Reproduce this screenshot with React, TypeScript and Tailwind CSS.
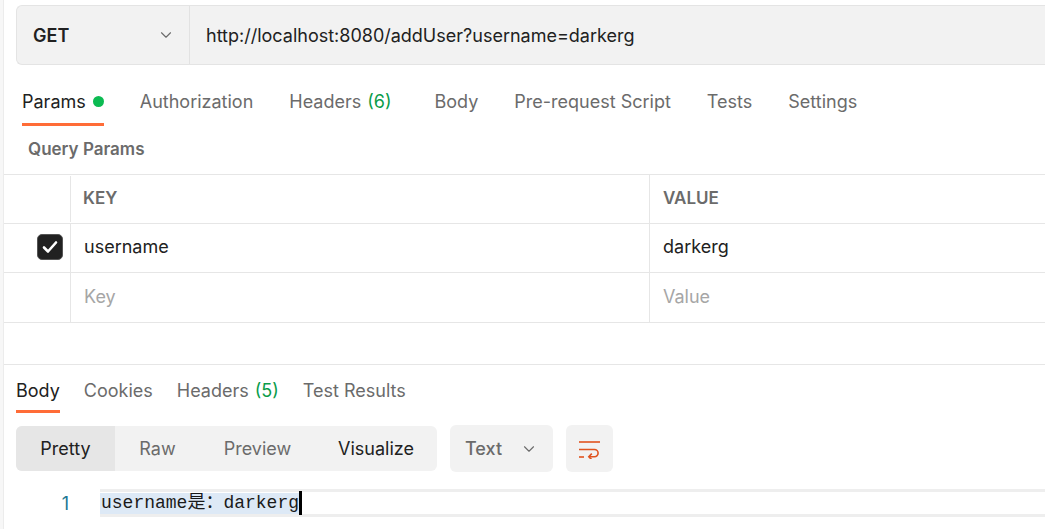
import { ChevronDown } from "lucide-react";

const reqTabs = [
  { label: "Params", dot: true, active: true },
  { label: "Authorization" },
  { label: "Headers", count: "(6)", extra: true },
  { label: "Body" },
  { label: "Pre-request Script" },
  { label: "Tests" },
  { label: "Settings" },
];

const resTabs = [
  { label: "Body", active: true },
  { label: "Cookies" },
  { label: "Headers", count: "(5)" },
  { label: "Test Results" },
];

function WrapIcon() {
  return (
    <svg width="24" height="20" viewBox="0 0 24 20" fill="none" stroke="#e0531f" strokeWidth="1.6">
      <path d="M1 3h21" />
      <path d="M1 10.5h15.5a3.6 3.6 0 0 1 0 7.2H11" />
      <path d="M13.8 14.6l-3 3.1 3 3" />
      <path d="M1 18h5" />
    </svg>
  );
}

export default function App() {
  return (
    <div
      className="w-[1045px] h-[529px] overflow-hidden bg-[#f7f7f7] pl-[3px]"
      style={{ fontFamily: "Inter, 'Noto Sans', sans-serif" }}
    >
      <div className="h-full bg-white border-l border-[#ececec]">
        {/* URL bar */}
        <div className="pt-[5px] pl-[12px]">
          <div className="flex h-[60px] bg-[#f2f2f2] border border-[#e4e4e4] border-r-0 rounded-l-[6px]">
            <div className="w-[173px] flex items-center justify-between pl-[16px] pr-[14px] border-r border-[#e2e2e2]">
              <span className="text-[18px] font-semibold text-[#212121]">GET</span>
              <ChevronDown size={18} strokeWidth={1.5} color="#6b6b6b" />
            </div>
            <div className="flex items-center pl-[16px] text-[18px] text-[#212121]">
              http://localhost:8080/addUser?username=darkerg
            </div>
          </div>
        </div>

        {/* Request tabs */}
        <div className="flex pl-[18px] h-[61px] items-end">
          {reqTabs.map((t) => (
            <div key={t.label} className={`flex flex-col ${t.extra ? "mr-[43px]" : "mr-[36px]"}`}>
              <div className={`flex items-center text-[18px] h-[26px] mb-[9px] ${t.active ? "text-[#212121]" : "text-[#6b6b6b]"}`}>
                {t.label}
                {t.count && <span className="ml-[6px] text-[#0a9c4a]">{t.count}</span>}
                {t.dot && <span className="ml-[7px] w-[11px] h-[11px] rounded-full bg-[#0cbb52]" />}
              </div>
              <div className={`h-[3px] ${t.active ? "bg-[#ff6c37]" : "bg-transparent"}`} />
            </div>
          ))}
        </div>

        {/* Query params */}
        <div className="h-[48px] flex items-center pl-[24px] text-[17px] font-semibold text-[#6b6b6b]">
          Query Params
        </div>

        <div className="border-t border-b border-[#e6e6e6]">
          <div className="flex h-[49px] border-b border-[#e6e6e6]">
            <div className="w-[67px] border-r border-[#e6e6e6] my-[1px]" />
            <div className="w-[579px] border-r border-[#e6e6e6] flex items-center pl-[12px] text-[17px] font-semibold text-[#6b6b6b]">
              KEY
            </div>
            <div className="flex-1 flex items-center pl-[13px] text-[17px] font-semibold text-[#6b6b6b]">VALUE</div>
          </div>
          <div className="flex h-[49px] border-b border-[#e6e6e6]">
            <div className="w-[67px] border-r border-[#e6e6e6] flex items-center justify-end pr-[7px] pb-[2px]">
              <div className="w-[26px] h-[26px] rounded-[5px] bg-[#212121] border border-[#555] flex items-center justify-center">
                <svg width="16" height="14" viewBox="0 0 16 14" fill="none" stroke="white" strokeWidth="2.6" strokeLinecap="round" strokeLinejoin="round">
                  <path d="M2 7.5l4 4 8-9" />
                </svg>
              </div>
            </div>
            <div className="w-[579px] border-r border-[#e6e6e6] flex items-center pl-[13px] pb-[3px] text-[18px] text-[#212121]">
              username
            </div>
            <div className="flex-1 flex items-center pl-[13px] pb-[3px] text-[18px] text-[#212121]">darkerg</div>
          </div>
          <div className="flex h-[49px]">
            <div className="w-[67px] border-r border-[#e6e6e6]" />
            <div className="w-[579px] border-r border-[#e6e6e6] flex items-center pl-[13px] pb-[3px] text-[18px] text-[#a6a6a6]">
              Key
            </div>
            <div className="flex-1 flex items-center pl-[13px] pb-[3px] text-[18px] text-[#a6a6a6]">Value</div>
          </div>
        </div>

        <div className="h-[42px] border-b border-[#e6e6e6]" />

        {/* Response tabs */}
        <div className="flex pl-[12px] h-[48px] items-end">
          {resTabs.map((t) => (
            <div key={t.label} className="mr-[24px] flex flex-col">
              <div className={`flex items-center text-[18px] h-[37px] pb-[2px] ${t.active ? "text-[#212121]" : "text-[#6b6b6b]"}`}>
                {t.label}
                {t.count && <span className="ml-[6px] text-[#0a9c4a]">{t.count}</span>}
              </div>
              <div className={`h-[3px] ${t.active ? "bg-[#ff6c37]" : "bg-transparent"}`} />
            </div>
          ))}
        </div>

        {/* Toolbar */}
        <div className="flex items-center pl-[12px] mt-[12px] gap-[13px]">
          <div className="flex h-[45px] w-[421px] bg-[#f2f2f2] rounded-[6px] overflow-hidden text-[18px]">
            <div className="w-[99px] bg-[#e6e6e6] flex items-center justify-center text-[#212121]">Pretty</div>
            <div className="w-[85px] flex items-center justify-center text-[#6b6b6b]">Raw</div>
            <div className="w-[115px] flex items-center justify-center text-[#6b6b6b]">Preview</div>
            <div className="flex-1 flex items-center justify-center text-[#212121]">Visualize</div>
          </div>
          <div className="flex h-[47px] w-[103px] bg-[#f2f2f2] rounded-[6px] items-center pl-[15px] gap-[18px] text-[18px] font-medium text-[#6b6b6b]">
            Text
            <ChevronDown size={18} strokeWidth={1.5} color="#6b6b6b" />
          </div>
          <div className="flex h-[47px] w-[47px] bg-[#f2f2f2] rounded-[6px] items-center justify-center">
            <WrapIcon />
          </div>
        </div>

        {/* Editor */}
        <div className="flex items-center mt-[17px] h-[28px]">
          <div className="w-[65px] text-right text-[18px] text-[#237893]">1</div>
          <div className="flex-1 ml-[31px] h-[28px] border-t-[3px] border-b-[3px] border-[#eeeeee] flex items-center">
            <span
              className="bg-[#dde9f6] pl-[1px] text-[18px] leading-[21px] text-[#1a1a1a]"
              style={{ fontFamily: "'Liberation Mono', 'Noto Sans CJK SC', monospace" }}
            >
              username是：darkerg
            </span>
            <span className="w-[3px] h-[24px] bg-black" />
          </div>
        </div>
      </div>
    </div>
  );
}
